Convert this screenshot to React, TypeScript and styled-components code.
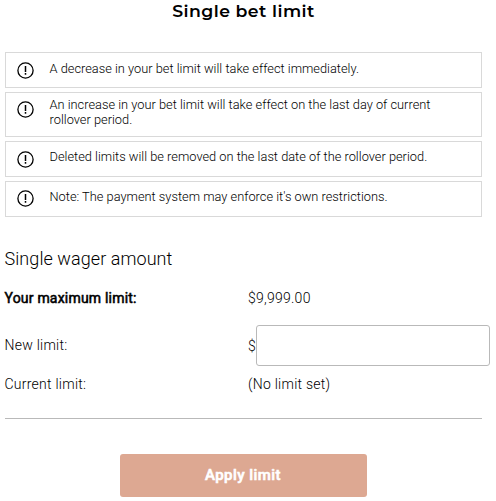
import React from 'react';
import styled, { createGlobalStyle } from 'styled-components';

const GlobalStyle = createGlobalStyle`
  * { box-sizing: border-box; }
  body { margin: 0; background: #fff; color: #000; font-family: Roboto, sans-serif; font-weight: 340; overflow: hidden; }
`;

const Page = styled.main`
  width: 496px;
  height: 501px;
  padding: 0 14px 0 5px;
  overflow: hidden;
`;

const Title = styled.h1`
  margin: 0 0 29px;
  height: 23px;
  text-align: center;
  font: 600 17.3px/21px Gotham, Montserrat, Lato, sans-serif;
  letter-spacing: 0.45px;
  color: #000;
`;

const Notices = styled.ul`
  list-style: none;
  margin: 0;
  padding: 0;
  display: flex;
  flex-direction: column;
  gap: 4px;
`;

const Notice = styled.li<{ $height: number; $iconTop: number; $textTop: number }>`
  display: flex;
  align-items: flex-start;
  height: ${p => p.$height}px;
  padding: 0 11px 0 10.5px;
  border: 1px solid #d9d9d9;
  svg { flex: none; margin: ${p => p.$iconTop}px 16px 0 0; }
  p { margin-top: ${p => p.$textTop}px; }
`;

const NoticeText = styled.p`
  margin: 0;
  width: 400px;
  font-size: 12.8px;
  line-height: 15px;
  letter-spacing: 0.01px;
`;

const Heading = styled.h2`
  margin: 31px 0 0 -0.5px;
  font-size: 18px;
  line-height: 22px;
  font-weight: 340;
  letter-spacing: 0.07px;
`;

const Row = styled.div<{ $height: number }>`
  display: grid;
  grid-template-columns: 243px 248px;
  align-items: center;
  height: ${p => p.$height}px;
  width: 491px;
  font-size: 14px;
  letter-spacing: 0.25px;
`;

const Label = styled.span`
  margin-left: -0.5px;
`;

const InputLabel = styled(Label)`
  padding-bottom: 2px;
`;

const Strong = styled(Label)`
  font-weight: 400;
  -webkit-text-stroke: 0.55px currentColor;
  letter-spacing: 0.2px;
`;

const AmountField = styled.label`
  display: flex;
  align-items: center;
`;

const Currency = styled.span`
  width: 8px;
`;

const AmountInput = styled.input`
  width: 234px;
  height: 41px;
  border: 1px solid #b9b9b9;
  border-radius: 3px;
  background: #fff;
`;

const Divider = styled.hr`
  margin: 16px 0 35px;
  border: 0;
  border-top: 1px solid #b9b9b9;
`;

const ApplyButton = styled.button`
  display: block;
  width: 247px;
  height: 43px;
  margin: 0 auto 0 115px;
  padding: 0 1px 0 0;
  border: 0;
  border-radius: 3px;
  background: #dda892;
  color: #fff;
  font: 500 15px/43px Roboto, sans-serif;
  letter-spacing: 0.45px;
  -webkit-text-stroke: 0.6px currentColor;
`;

const AlertIcon = () => (
  <svg width="17" height="17" viewBox="0 0 17 17" fill="none" stroke="#000">
    <circle cx="8.5" cy="8.5" r="7.6" strokeWidth="1.3" />
    <path d="M8.5 4v6M8.5 11v1.7" strokeWidth="1.5" />
  </svg>
);

const notices = [
  { text: 'A decrease in your bet limit will take effect immediately.', height: 36, iconTop: 9, textTop: 8 },
  { text: 'An increase in your bet limit will take effect on the last day of current rollover period.', height: 45, iconTop: 8, textTop: 4 },
  { text: 'Deleted limits will be removed on the last date of the rollover period.', height: 36, iconTop: 9, textTop: 7 },
  { text: "Note: The payment system may enforce it's own restrictions.", height: 36, iconTop: 8, textTop: 7 },
];

export default function App() {
  return (
    <>
      <GlobalStyle />
      <Page>
        <Title>Single bet limit</Title>
        <Notices>
          {notices.map(n => (
            <Notice key={n.text} $height={n.height} $iconTop={n.iconTop} $textTop={n.textTop}>
              <AlertIcon />
              <NoticeText>{n.text}</NoticeText>
            </Notice>
          ))}
        </Notices>
        <Heading>Single wager amount</Heading>
        <Row $height={55}><Strong>Your maximum limit:</Strong><span>$9,999.00</span></Row>
        <Row $height={41}>
          <InputLabel>New limit:</InputLabel>
          <AmountField><Currency>$</Currency><AmountInput aria-label="New limit" /></AmountField>
        </Row>
        <Row $height={36}><Label>Current limit:</Label><span>(No limit set)</span></Row>
        <Divider />
        <ApplyButton type="button">Apply limit</ApplyButton>
      </Page>
    </>
  );
}
